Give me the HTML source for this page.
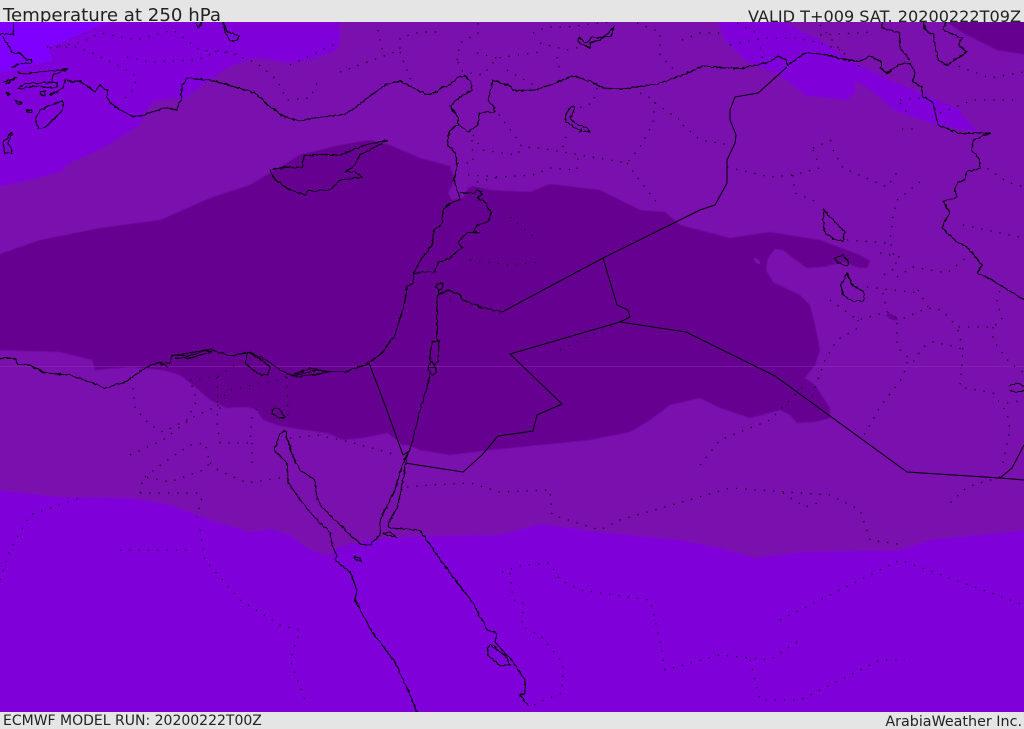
<!DOCTYPE html>
<html><head><meta charset="utf-8"><style>
html,body{margin:0;padding:0;background:#e5e5e5;width:1024px;height:729px;overflow:hidden}
svg{display:block;position:absolute;left:0;top:0}
</style></head><body>
<svg width="1024" height="729" viewBox="0 0 1024 729" xmlns="http://www.w3.org/2000/svg">
<defs>
<clipPath id="m"><rect x="0" y="22" width="1024" height="690"/></clipPath>
<filter id="w" filterUnits="userSpaceOnUse" x="0" y="0" width="1024" height="729">
<feTurbulence type="fractalNoise" baseFrequency="0.28" numOctaves="2" seed="4"/>
<feDisplacementMap in="SourceGraphic" scale="3.2" xChannelSelector="R" yChannelSelector="G"/>
</filter>
</defs>
<rect width="1024" height="729" fill="#e5e5e5"/>
<g font-family="'DejaVu Sans',sans-serif" fill="#222">
<text x="3" y="21" font-size="18.17">Temperature at 250 hPa</text>
<text x="1021" y="22" font-size="16.1" text-anchor="end">VALID T+009 SAT. 20200222T09Z</text>
<text x="3" y="725" font-size="14">ECMWF MODEL RUN: 20200222T00Z</text>
<text x="1022" y="726" font-size="14.3" text-anchor="end">ArabiaWeather Inc.</text>
</g>
<rect x="0" y="22" width="1024" height="690" fill="#7a10ad"/>
<g clip-path="url(#m)">
<g stroke-linejoin="round">
<!-- bright band top-left -->
<path fill="#7f00d9" stroke="#7d0bc4" d="M-3,187L30,180L60,172L70,163L100,150L140,125L148,107L153,102L173,98L182,100L200,87L227,68L250,59L267,59L287,63L310,60L333,52L340,45L340,18L-3,18Z"/>
<path fill="#7f00ff" stroke="#7f08ea" d="M-3,72L12,70L30,65L52,60L48,48L83,32L117,18L-3,18Z"/>
<!-- top-right band -->
<path fill="#7f00d9" stroke="#7d0bc4" d="M716,18L725,40L747,62L780,75L795,87L807,96L847,100L856,92L855,83L858,82L880,97L893,110L937,125L977,132L973,127L957,108L913,90L880,75L853,62L823,42L776,18Z"/>
<!-- top-right dark -->
<path fill="#660090" stroke="#700aa0" d="M941,18L963,33L997,50L1028,55L1028,18Z"/>
<!-- bottom bright -->
<path fill="#7f00d9" stroke="#7d0bc4" d="M-3,490L60,497L130,498L170,505L210,520L250,532L270,529L290,535L310,550L330,556L336,548L370,540L420,536L500,535L540,524L600,532L680,540L720,548L755,558L800,552L900,550L930,540L1028,530L1028,716L-3,716Z"/>
<!-- central dark -->
<path fill="#660090" stroke="#700aa0" d="M-3,255L40,240L100,228L160,220L210,198L250,185L300,155L340,145L370,140L390,145L420,158L450,166L455,180L448,193L452,200L463,198L468,188L473,186L490,190L530,192L550,184L600,190L640,210L665,212L680,225L730,238L770,232L820,240L860,255L870,261L867,268L860,268L843,262L823,267L807,268L793,258L783,250L775,249L768,258L766,270L773,282L800,295L810,305L815,325L820,350L815,365L805,378L815,385L830,408L830,418L815,422L797,423L790,415L780,410L750,418L720,408L700,398L670,405L650,420L630,432L590,440L540,445L490,450L450,455L420,450L408,445L402,445L397,440L387,433L363,438L343,440L327,433L297,429L277,425L263,420L257,410L247,407L227,408L210,400L193,385L180,375L163,370L130,367L95,370L92,360L60,352L-3,350Z"/>
<ellipse cx="757" cy="261" rx="4" ry="2" transform="rotate(40 757 261)" fill="#7a10ad"/>
<ellipse cx="892" cy="317" rx="6" ry="2.5" transform="rotate(25 892 317)" fill="#660090"/>
</g>
<rect x="0" y="366" width="1024" height="1" fill="#8a2ab0" opacity=".55"/>
<!-- dotted borders -->
<path fill="none" stroke="#000" stroke-opacity=".85" stroke-width="1.3" stroke-dasharray="1.3 8" d="
M47,47L77,47L97,55L123,68L137,77L133,90L125,98
M50,48L83,42L100,33L137,40L173,30L200,50L230,53L257,63L277,80L287,100L310,98L317,83
M127,57L150,62L197,60L220,50L240,55M290,65L307,57L337,43
M340,72L373,60L400,50L400,38L420,32L440,32M378,30L383,53M400,52L412,83
M457,60L460,43L478,33L478,23M458,62L463,72L483,75L497,58L540,52M477,53L497,58
M533,33L547,27L567,27L607,22M540,43L567,50L580,47M557,57L560,72
M637,23L660,32L660,55L677,73M507,70L537,87M597,88L593,103L573,110
M640,93L655,100L653,123L640,147L627,163L580,155L540,148L522,147L513,133L500,117L497,107
M655,103L680,120M473,135L482,150L517,155L522,147M472,140L473,163L458,163
M468,175L500,177L533,175L550,168L577,170L578,157M477,182L500,177M563,147L567,133
M627,163L637,177L657,203M510,217L537,240M470,260L510,265L540,262M450,300L460,290M560,350L620,322
M682,40L700,33L723,33M730,45L763,38L797,38L820,43L840,50M737,23L757,33L763,60
M820,35L873,32M820,25L840,50L860,67M950,63L990,78L1024,72
M900,100L923,98M900,103L910,117M902,129L920,129M940,113L973,100L1013,100
M683,125L700,140L730,145M813,148L837,138M813,150L820,167M833,150L843,168L887,187L900,168
M727,167L770,177L793,175L820,168M793,175L795,193L817,202
M920,182L897,200L893,217L890,240L897,267L880,277M980,163L1007,182L1024,187
M963,225L1024,238M847,240L887,243M880,253L900,257M897,277L913,267L947,273L967,257M867,287L920,293
M830,300L858,320L887,312L900,320L927,308L942,310L957,327L993,327L1002,320L997,300L1000,290
M883,293L887,312M918,290L928,307M858,320L858,328L837,340L825,360L817,382L812,397
M897,323L897,347L913,362L923,347L933,342L957,347L963,350L960,387L993,393L1007,413L1010,430L1003,463
M958,330L963,350M993,327L993,340L1010,363L1024,373M907,362L903,377L880,407L863,437
M1007,403L1024,400M1000,477L967,487L950,503M783,493L805,507L818,503
M133,388L135,408L150,425L163,432L187,420L197,400L190,380M130,455L163,440L193,417L213,408L223,408
M190,380L217,377L237,363M217,402L230,390L263,383L287,377M217,377L218,402L217,423L220,443L250,443L252,418L257,408
M145,477L163,463L190,445L205,443L210,463L203,470L170,482L145,477M210,463L218,470L247,483L285,477
M140,493L143,477M140,493L197,493L202,497L197,517M252,443L252,470M287,377L288,420
M290,438L317,435L350,442L397,455M407,487L430,485L470,483L500,492L550,490L552,515L600,530L620,520L730,488L830,495L860,510L870,540L905,545
M700,465L720,440L770,420L805,385
M0,580L10,550L30,515L80,498M120,550L190,550M200,530L205,560L240,600L280,625L300,630L290,660L305,700
M502,572L523,565L550,563L560,580L580,590L650,600L660,640L665,670L720,655L770,660L800,640
M510,573L513,600L523,603L522,627L540,635L563,663L562,693L537,703L532,707
M780,620L840,590L900,560L1024,605M750,660L760,700L800,700L880,660L905,660"/>
<!-- straight borders -->
<g fill="none" stroke="#000" stroke-width="1" stroke-linejoin="round">
<path d="M787,67L758,93L735,97L730,110L730,120L736,135L735,143L727,160L727,183L715,205L700,210L603,258L502,312"/>
<path d="M603,258L617,305L628,310L630,317L620,322L510,354L562,404L537,415L533,431L498,436L482,455L463,472L405,463"/>
<path d="M620,322L686,332L775,376L907,472L1000,478L1024,480M1000,478L1012,468L1024,445"/>
<path d="M369,363L385,405L403,455L408,452"/>
</g>
<!-- coasts -->
<g fill="none" stroke="#000" stroke-width="1.1" stroke-linejoin="round" filter="url(#w)">
<path d="M13,20L13,30L14,35L2,33L-3,37M3,37L10,48L12,53L20,53L27,60L32,60L30,63L17,64L12,68M2,83L17,77L6,84"/>
<path d="M17,72L23,74L68,69L53,75L52,82L57,83L57,86L55,88L33,86L20,89L18,88L23,84L37,83L52,82M55,93L63,88L65,80L73,82L80,81L83,83L95,92L100,85L108,91L107,97L110,103L120,110L133,117L143,115L165,108L176,110L181,100L182,85L188,78L210,80L235,87L255,93L270,107L285,117L300,121L320,117L343,115L355,108L365,100L385,85L400,81L410,86L427,95L437,92L442,87L447,87L458,77L465,76L471,82L472,90L460,97L450,106L458,117L458,125L450,130L447,145L455,152L457,165L454,180L458,193L460,200L450,203L443,210L442,223L434,230L432,245L422,258L414,272L413,283L407,287L405,302L395,335L380,355L365,365L345,372L330,372L317,370L293,376L280,370L270,362L250,352L230,356L210,349L190,356L172,355L170,363L157,363L145,368L125,382L105,388L90,382L70,375L45,373L30,365L18,365L15,358L-3,358"/>
<path d="M160,364L168,367M172,356L205,350L212,352L190,358L175,358M245,363L248,352L258,358L270,367L268,375L258,374L245,363M290,376L310,368L332,372L312,375L295,377"/>
<path d="M270,170L275,180L290,190L300,193L305,195L308,191L330,190L340,180L362,177L355,172L345,172L355,165L360,155L388,140L365,145L340,155L304,155L302,168L285,167L270,170"/>
<path d="M459,125L468,132L478,125L479,113L495,112L494,107L488,100L493,80L512,87L513,91L535,90L553,84L573,76L590,81L603,88L623,89L657,84L680,76L703,66L725,68L742,68L770,62L778,56L787,60L787,66L805,53L823,54L847,60L860,61L870,56L882,62L880,68L887,73L900,64L910,63L915,72L913,82L922,87L923,97L933,102L938,125L958,133L990,133L973,140L972,150L980,160L980,168L967,172L965,180L957,183L955,190L957,197L943,202L950,212L942,228L957,242L967,247L982,265L977,273L990,279L1028,302"/>
<path d="M882,20L882,28L900,33L900,48L910,60M923,20L925,30L933,35L938,60L947,65L967,52L958,45L962,38L943,30L947,20"/>
<path d="M502,312L480,307L463,300L460,295L448,290L438,295"/>
<path d="M439,291L438,295L437,313L437,340M437,284L442,283L443,287L439,291L436,287ZM432,342L439,340L438,362L435,365L431,362L430,353ZM431,362L428,368L435,367L437,372L433,375L430,373L428,368M430,375L429,380L420,410L410,450L408,452"/>
<path d="M460,193L475,193L477,190L483,194L477,198L485,202L491,213L488,222L478,225L473,232L480,233L467,233L458,242L462,248L457,252L450,258L438,263L435,272L423,272L414,273"/>
<path d="M285,430L280,434L274,450L287,463L288,482L300,500L317,520L330,532L332,545L337,556L335,560L350,572L357,590L355,600L372,632L395,662L410,695L418,714"/>
<path d="M285,430L292,455L300,470L315,480L316,495L320,505L335,520L350,535L362,545L370,545L380,535L380,520L395,490L402,465L408,452L403,480L398,505L388,525L390,528L420,530L422,533L435,552L450,573L473,603L487,630L497,633L495,642L513,662L525,680L525,693L520,695L528,705"/>
<path d="M384,533L388,536L396,537L390,532ZM354,557L360,558L361,561L356,560ZM272,409L278,408L285,417L278,418L272,413ZM488,648L490,645L505,655L510,665L500,666L488,655ZM494,645L498,650"/>
<path d="M36,117L40,110L50,105L63,101L63,110L55,118L45,128L38,128L36,122ZM10,133L12,133L8,143L12,150L12,153L5,153L3,142L8,138ZM27,112L32,112L32,110L27,110ZM15,100L22,103L18,105ZM6,92L11,94L8,95ZM40,92L45,91L45,96L41,95ZM50,94L55,92L55,94L50,95Z"/>
<path d="M222,20L228,32L240,36L236,41L230,41L226,34L222,20M195,20L198,28L203,20"/>
<path d="M577,40L582,44L590,48L590,43L600,40L608,33L614,26L611,36L602,38L592,37L586,43L580,38L577,40"/>
<path d="M572,106L565,115L566,122L578,130L590,132L586,127L578,125L570,118L574,112L574,106ZM582,128L580,133"/>
<path d="M824,209L828,215L838,225L845,232L843,241L835,240L825,233L823,220ZM835,258L843,255L849,262L846,266L838,263ZM847,273L852,285L864,292L864,301L852,301L843,295L841,285Z"/>
<path d="M1009,386L1018,383L1024,386M1009,390L1017,392L1024,391"/>
</g>
</g>
</svg>
</body></html>
